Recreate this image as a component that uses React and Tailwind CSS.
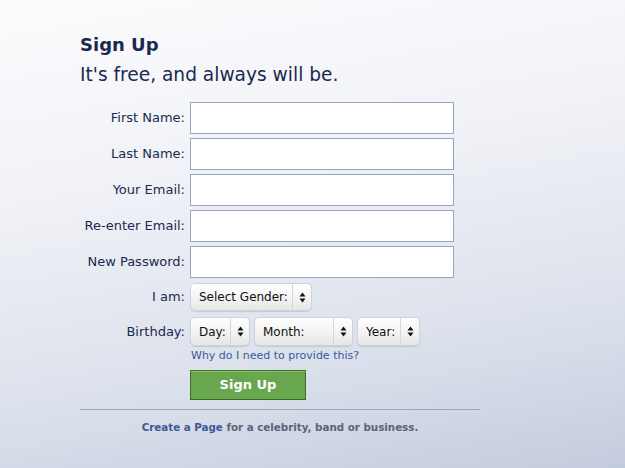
import React from 'react';

const font = "font-['Lucida_Grande','DejaVu_Sans',sans-serif]";

const fields = ['First Name:', 'Last Name:', 'Your Email:', 'Re-enter Email:', 'New Password:'];

const Arrows = () => (
  <svg width="7" height="11" viewBox="0 0 7 11" aria-hidden="true">
    <path d="M3.5 0.5 L6.5 4.5 L0.5 4.5 Z" fill="#111" />
    <path d="M3.5 10.5 L6.5 6.5 L0.5 6.5 Z" fill="#111" />
  </svg>
);

const Select = ({ label, width, arrowWidth = 'w-[19px]', height = 'h-[28px]' }) => (
  <div
    className={`flex ${width} ${height} items-stretch rounded-[5px] border border-[#cfd3dc] bg-[linear-gradient(#ffffff,#f4f4f4_50%,#e6e6e6)] shadow-[0_1px_1px_rgba(0,0,0,0.12)]`}
  >
    <span className="flex flex-1 items-center whitespace-nowrap pl-[8px] text-[12px] text-[#111]">{label}</span>
    <span className={`flex ${arrowWidth} shrink-0 items-center justify-center border-l border-[#d6d6d6]`}>
      <Arrows />
    </span>
  </div>
);

export default function App() {
  return (
    <div
      className={`${font} min-h-screen w-full bg-[linear-gradient(170deg,#fcfcfe_0%,#f1f2f7_35%,#d9dfea_75%,#c3cbde_100%)]`}
    >
      <div className="w-[625px] h-[468px] pl-[80px] pt-[34px]">
        <h1 className="text-[18px] leading-[22px] font-bold text-[#1a2a4e]">Sign Up</h1>
        <p className="mt-[8px] text-[18.6px] leading-[22px] text-[#1a2a4e]">It's free, and always will be.</p>

        <div className="mt-[16px] flex flex-col gap-[4px]">
          {fields.map((f) => (
            <div key={f} className="flex items-center">
              <label className="w-[106px] pr-[1px] text-right text-[13px] text-[#1a2a4e]">{f}</label>
              <input
                type="text"
                className="ml-[4px] h-[32px] w-[264px] border border-[#97a5c2] bg-white outline-none"
              />
            </div>
          ))}
        </div>

        <div className="mt-[5px] flex items-center">
          <span className="w-[106px] pr-[1px] text-right text-[13px] text-[#1a2a4e]">I am:</span>
          <div className="ml-[4px]">
            <Select label="Select Gender:" width="w-[122px]" />
          </div>
        </div>

        <div className="mt-[6px] flex items-center">
          <span className="w-[106px] pr-[1px] text-right text-[13px] text-[#1a2a4e]">Birthday:</span>
          <div className="ml-[4px] flex gap-[4px]">
            <Select label="Day:" width="w-[60px]" height="h-[29px]" />
            <Select label="Month:" width="w-[99px]" height="h-[29px]" />
            <Select label="Year:" width="w-[63px]" height="h-[29px]" />
          </div>
        </div>

        <div className="pl-[110px]">
          <a href="#" className="mt-[3px] ml-[1px] block text-[11px] leading-[14px] text-[#3b5998]">
            Why do I need to provide this?
          </a>
          <button
            type="button"
            className="mt-[7px] h-[30px] w-[116px] border border-[#3b6e22] bg-[#69a74e] text-[13px] font-bold text-white shadow-[inset_0_1px_0_#8ac176]"
          >
            Sign Up
          </button>
        </div>

        <div className="mt-[9px] w-[400px] border-t border-[#9ea8bd]" />
        <p className="mt-[10px] w-[400px] text-center text-[10.3px] font-bold text-[#5b6478]">
          <a href="#" className="text-[#3b5998]">Create a Page</a> for a celebrity, band or business.
        </p>
      </div>
    </div>
  );
}
